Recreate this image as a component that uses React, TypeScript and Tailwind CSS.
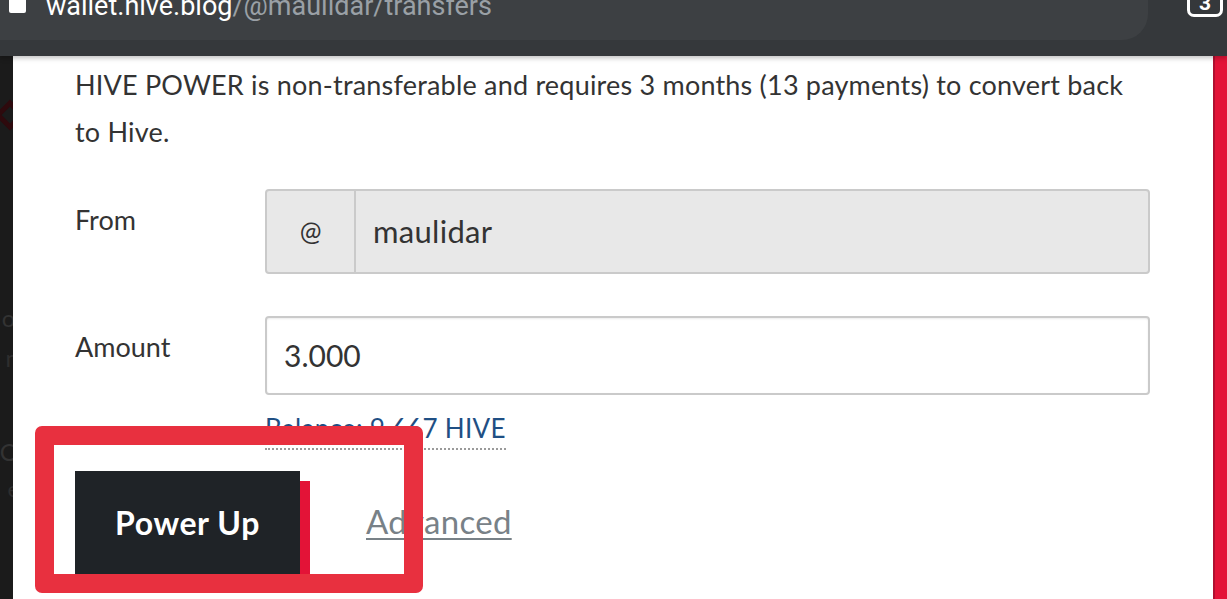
export default function App() {
  return (
    <div className="relative w-[1227px] h-[599px] overflow-hidden bg-[#1b1b1b] flex flex-col font-['Lato',sans-serif]">
      {/* browser address bar */}
      <div className="relative z-10 h-[56px] shrink-0 bg-[#35383b] flex shadow-[0_2px_5px_rgba(0,0,0,0.25)]">
        <div className="w-[1148px] h-[40px] bg-[#3d4043] rounded-br-[26px] flex items-start overflow-hidden">
          <div className="ml-[9px] w-[17px] h-[13px] bg-white rounded-b-[2px]" />
          <div className="ml-[20px] -mt-[7px] text-[27px] leading-none whitespace-nowrap font-['Roboto',sans-serif]">
            <span className="text-white">wallet.hive.blog</span>
            <span className="text-[#9aa0a6]">/@maulidar/transfers</span>
          </div>
        </div>
        <div className="ml-[39px] -mt-[18px] w-[36px] h-[35px] border-[3px] border-white rounded-[7px] flex items-end justify-center">
          <span className="text-white text-[21px] font-bold leading-none font-['Roboto',sans-serif]">3</span>
        </div>
      </div>

      <div className="flex flex-1 min-h-0">
        {/* dimmed page behind the modal */}
        <div className="w-[13px] shrink-0 bg-[#1b1b1b] flex flex-col items-end overflow-hidden">
          <div className="mt-[48px] mr-[-8px] w-[22px] h-[22px] rotate-45 border-[5px] border-[#2e0a0d]" />
          <div className="mt-[180px] text-[#333] text-[24px] leading-none mr-[-8px]">ol</div>
          <div className="mt-[16px] text-[#2e2e2e] text-[24px] leading-none mr-[-6px]">n</div>
          <div className="mt-[70px] text-[#333] text-[24px] leading-none mr-[-6px]">O</div>
          <div className="mt-[14px] text-[#2e2e2e] text-[22px] leading-none mr-[-6px]">e</div>
        </div>

        {/* modal */}
        <div className="w-[1200px] shrink-0 bg-white pl-[62px] pr-[63px] pt-[5px]">
          <p className="text-[27px] tracking-[0.2px] leading-[47px] text-[#333]">
            HIVE POWER is non-transferable and requires 3 months (13 payments) to convert back to Hive.
          </p>

          <div className="mt-[34px] flex items-start">
            <label className="w-[190px] mt-[15px] text-[27px] leading-[32px] text-[#333]">From</label>
            <div className="w-[885px] h-[85px] flex rounded-[4px] border-2 border-[#cacaca] bg-[#e8e8e8] overflow-hidden">
              <div className="w-[89px] shrink-0 border-r-2 border-[#cacaca] flex items-center justify-center text-[26px] text-[#333]">
                @
              </div>
              <div className="flex-1 flex items-center pl-[17px] text-[31px] tracking-[0.3px] text-[#333]">maulidar</div>
            </div>
          </div>

          <div className="mt-[42px] flex items-start">
            <label className="w-[190px] mt-[15px] text-[27px] leading-[32px] text-[#333]">Amount</label>
            <div className="w-[885px]">
              <div className="h-[79px] flex items-center rounded-[4px] border-2 border-[#cacaca] bg-white pl-[17px] text-[30px] text-[#333] shadow-[inset_0_1px_2px_rgba(0,0,0,0.08)]">
                3.000
              </div>
              <div className="mt-[18px]">
                <span className="inline-block text-[26px] tracking-[0.3px] leading-[30px] pb-[5px] text-[#1f4f84] border-b-2 border-dotted border-[#9a9a9a]">
                  Balance: 9.667 HIVE
                </span>
              </div>
            </div>
          </div>

          <div className="mt-[21px] flex items-start">
            <div className="relative w-[225px] h-[104px]">
              <div className="absolute left-[10px] top-[10px] w-[225px] h-[104px] bg-[#e31337]" />
              <button className="relative w-[225px] h-[104px] bg-[#1f2327] text-white text-[32px] tracking-[0.6px] font-bold">
                Power Up
              </button>
            </div>
            <a className="ml-[66px] mt-[30px] text-[33px] tracking-[0.3px] leading-[40px] text-[#788187] underline underline-offset-[4px] decoration-2">
              Advanced
            </a>
          </div>
        </div>

        <div className="flex-1 bg-[#e31337] border-l-2 border-[#b01030]" />
      </div>

      {/* red annotation frame */}
      <div className="absolute left-[35px] top-[426px] w-[388px] h-[167px] border-[19px] border-[#e8303f] rounded-[7px]" />
    </div>
  );
}
